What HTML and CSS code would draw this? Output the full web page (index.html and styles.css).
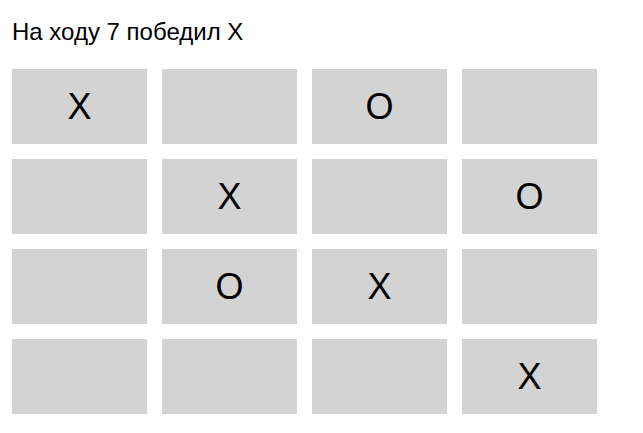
FILE: index.html
```html
<!DOCTYPE html>
<html lang="ru">
<head>
  <meta charset="UTF-8">
  <title>Крестики-нолики</title>
  <link rel="stylesheet" href="styles.css">
</head>
<body>
  <div class="status">На ходу 7 победил X</div>

  <div class="board">
    <div class="cell">X</div>
    <div class="cell"></div>
    <div class="cell">O</div>
    <div class="cell"></div>

    <div class="cell"></div>
    <div class="cell">X</div>
    <div class="cell"></div>
    <div class="cell">O</div>

    <div class="cell"></div>
    <div class="cell">O</div>
    <div class="cell">X</div>
    <div class="cell"></div>

    <div class="cell"></div>
    <div class="cell"></div>
    <div class="cell"></div>
    <div class="cell">X</div>
  </div>
</body>
</html>
```

FILE: styles.css
```css
body {
  font-family: "Liberation Sans", Arial, sans-serif;
  margin: 0;
  padding: 18px 12px;
  color: #000;
  background: #fff;
}

.status {
  font-size: 24px;
  line-height: 27px;
  margin-bottom: 24px;
}

.board {
  display: grid;
  grid-template-columns: repeat(4, 135px);
  grid-auto-rows: 75px;
  gap: 15px;
}

.cell {
  background: lightgray;
  display: flex;
  align-items: center;
  justify-content: center;
  font-size: 36px;
}
```
